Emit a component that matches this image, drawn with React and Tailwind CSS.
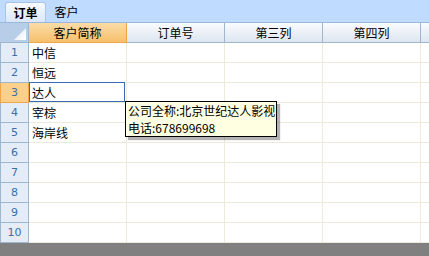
const rows = ['中信', '恒远', '达人', '宰棕', '海岸线', '', '', '', '', ''];
const cols = ['订单号', '第三列', '第四列'];

const font = { fontFamily: "'Noto Sans CJK SC', 'Liberation Sans', sans-serif" };

export default function App() {
  return (
    <div className="w-[429px] h-[256px] overflow-hidden bg-white flex flex-col text-[12px] text-black leading-none" style={font}>
      {/* tabs */}
      <div className="h-[22px] bg-[#bfdbff] flex items-end pl-[5px] shrink-0">
        <div className="h-[20px] w-[41px] rounded-t-[3px] border border-b-0 border-[#a9c4e6] bg-gradient-to-b from-[#f7faff] to-[#dbe7f7] flex items-center justify-center font-bold">
          订单
        </div>
        <div className="h-[20px] w-[41px] flex items-center justify-center">客户</div>
      </div>

      {/* header */}
      <div className="grid grid-cols-[29px_98px_98px_98px_98px_1fr] h-[21px] shrink-0 border-t border-[#9ab8dd]">
        <div className="relative bg-[#b8cde8] border-r border-b border-[#9eb6ce]">
          <svg className="absolute right-[2px] bottom-[2px]" width="12" height="12" viewBox="0 0 12 12">
            <defs>
              <linearGradient id="tri" x1="0" y1="0" x2="1" y2="1">
                <stop offset="0" stopColor="#dfe9f6" />
                <stop offset="1" stopColor="#ffffff" />
              </linearGradient>
            </defs>
            <polygon points="12,0 12,12 0,12" fill="url(#tri)" />
          </svg>
        </div>
        <div className="bg-gradient-to-b from-[#fbdca6] to-[#f6c06c] border-r border-b border-[#f2a447] flex items-center justify-center">
          客户简称
        </div>
        {cols.map((c) => (
          <div key={c} className="bg-gradient-to-b from-[#fafcfe] to-[#dde5f0] border-r border-b border-[#9eb6ce] flex items-center justify-center">
            {c}
          </div>
        ))}
        <div className="bg-gradient-to-b from-[#fafcfe] to-[#dde5f0] border-b border-[#9eb6ce]" />
      </div>

      {/* rows */}
      <div className="relative flex flex-col shrink-0">
        {rows.map((name, i) => {
          const sel = i === 2;
          return (
            <div key={i} className="grid grid-cols-[29px_98px_98px_98px_98px_1fr] h-[20px]">
              <div
                className={`border-l border-r border-b flex items-center justify-center text-[11px] text-[#3b6ea8] ${
                  sel ? 'bg-[#fcd08a] border-[#f2a447]' : 'bg-[#e4ecf7] border-[#9eb6ce]'
                }`}
                style={{ fontFamily: "'DejaVu Sans', sans-serif" }}
              >
                {i + 1}
              </div>
              <div className="relative border-r border-b border-[#eeeadb] flex items-center pl-[3px]">
                {name}
                {sel && <span className="absolute -top-px left-0 right-px bottom-0 border border-[#3a6ab2]" />}
              </div>
              <div className="border-r border-b border-[#eeeadb]" />
              <div className="border-r border-b border-[#eeeadb]" />
              <div className="border-r border-b border-[#eeeadb]" />
              <div className="border-b border-[#eeeadb]" />
            </div>
          );
        })}

        {/* tooltip */}
        <div className="absolute left-[125px] top-[58px] w-[152px] bg-[#ffffe1] border border-black shadow-[3px_3px_1px_rgba(0,0,0,0.3)] pl-[2px] flex flex-col leading-[17px] whitespace-nowrap">
          <div>公司全称:北京世纪达人影视</div>
          <div>电话:678699698</div>
        </div>
      </div>

      <div className="flex-1 bg-[#808080]" />
    </div>
  );
}
